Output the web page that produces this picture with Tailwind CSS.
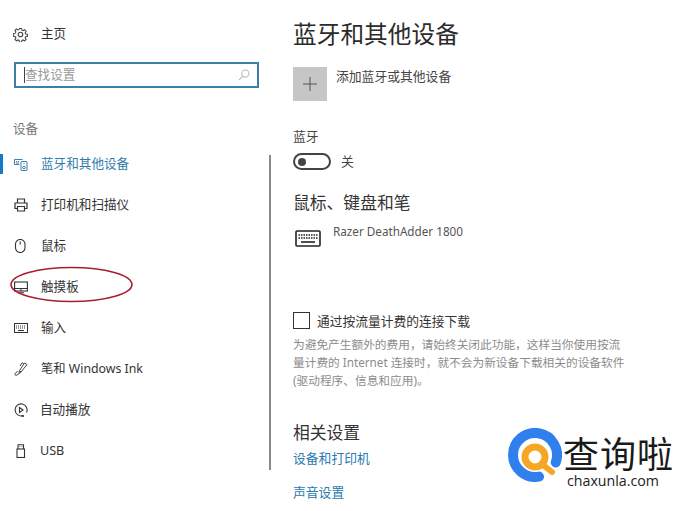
<!DOCTYPE html>
<html lang="zh-CN">
<head>
  <meta charset="UTF-8" />
  <title>蓝牙和其他设备</title>
  <script src="https://cdn.jsdelivr.net/npm/@tailwindcss/browser@4"></script>
</head>
<body class="bg-white">
  <div class="relative w-[682px] h-[511px] overflow-hidden flex font-['Noto_Sans','Noto_Sans_CJK_SC',sans-serif] text-[#333]">

    <!-- sidebar -->
    <aside class="w-[269px] shrink-0 pt-[26px] relative">
      <div class="flex items-center h-[16px] pl-[13px] gap-[13px] text-[12.600px]">
        <svg class="w-[15px] h-[15px]" viewBox="0 0 16 16" fill="none" stroke="#444" stroke-width="1.200"><circle cx="8" cy="8" r="2.400"/><path d="M6.800 1h2.400l.4 2 1.400.6 1.700-1.100 1.700 1.700-1.100 1.700.6 1.400 2 .4v2.400l-2 .4-.6 1.400 1.100 1.700-1.700 1.700-1.700-1.100-1.400.6-.4 2H6.800l-.4-2-1.400-.6-1.700 1.100-1.700-1.700 1.100-1.700-.6-1.400-2-.4V6.800l2-.4.6-1.400-1.100-1.700 1.700-1.700 1.700 1.100 1.400-.6z" transform="translate(.6 .6) scale(.93)"/></svg>
        <span>主页</span>
      </div>
      <div class="ml-[14px] mt-[20px] w-[245px] h-[26px] border-2 border-[#3f7ea6] flex items-center pl-[8px] pr-[7px] justify-between">
        <span class="text-[12.600px] text-[#999] border-l border-[#444] leading-[16px]">查找设置</span>
        <svg class="w-[12px] h-[12px]" viewBox="0 0 12 12" fill="none" stroke="#bbb" stroke-width="1.100"><circle cx="7.400" cy="4.600" r="3.600"/><path d="M4.800 7.200L1 11"/></svg>
      </div>
      <div class="pl-[13px] mt-[33px] text-[12.600px] leading-[16px] text-[#777]">设备</div>

      <nav class="mt-[19px] flex flex-col gap-[25px] text-[12.600px]">
        <a class="relative flex items-center h-[16px] pl-[14px] gap-[13px] text-[#2f7cab]">
          <span class="absolute left-0 top-[-2px] w-[3px] h-[20px] bg-[#1479c9]"></span>
          <svg class="w-[14px] h-[14px]" viewBox="0 0 14 14" fill="none" stroke="#3b7fa8" stroke-width="1"><path d="M8.500 2.500H.5v5h5"/><path d="M2 4.500h1M4 4.500h1M2 6h3"/><rect x="7" y="4.500" width="6" height="9" rx=".5"/><circle cx="10" cy="10.500" r="1.300"/><path d="M9.500 6.500h1"/></svg>
          <span>蓝牙和其他设备</span>
        </a>
        <a class="flex items-center h-[16px] pl-[14px] gap-[13px]">
          <svg class="w-[14px] h-[14px]" viewBox="0 0 14 14" fill="none" stroke="#333" stroke-width="1.200"><path d="M3.500 5V1h7v4M3.500 10.500H1V5h12v5.500h-2.500"/><path d="M3.500 8.500h7V13h-7z"/></svg>
          <span>打印机和扫描仪</span>
        </a>
        <a class="flex items-center h-[16px] pl-[14px] gap-[13px]">
          <svg class="w-[14px] h-[14px]" viewBox="0 0 14 14" fill="none" stroke="#333" stroke-width="1.100"><rect x="1.500" y=".5" width="9.500" height="13" rx="4.700"/><path d="M6.200 2.500v3"/></svg>
          <span>鼠标</span>
        </a>
        <a class="flex items-center h-[16px] pl-[14px] gap-[13px]">
          <svg class="w-[14px] h-[14px]" viewBox="0 0 14 14" fill="none" stroke="#333" stroke-width="1.100"><rect x=".6" y="2" width="12.800" height="9"/><path d="M.6 8.500h12.800M7 8.500V11M4 12.800h6"/></svg>
          <span>触摸板</span>
        </a>
        <a class="flex items-center h-[16px] pl-[14px] gap-[13px]">
          <svg class="w-[14px] h-[14px]" viewBox="0 0 14 14" fill="none" stroke="#333" stroke-width="1"><rect x=".5" y="2.500" width="13" height="9"/><path d="M2 5h10M2 7h10" stroke-dasharray="1 1"/><path d="M4 9.500h6"/></svg>
          <span>输入</span>
        </a>
        <a class="flex items-center h-[16px] pl-[14px] gap-[13px]">
          <svg class="w-[14px] h-[14px]" viewBox="0 0 14 14" fill="none" stroke="#444" stroke-width="1"><path d="M13 2.500L10.500 1 5.500 8.500 7 10z"/><path d="M5.500 8.500L5 11.500 7 10"/><path d="M9.500 1.500L8 .8 6 4"/><path d="M5 11.500C3.500 13.500 .8 13.800 .8 12.300c0-1.500 2.200-2 3-3.300"/></svg>
          <span class="text-[12.300px]">笔和 Windows Ink</span>
        </a>
        <a class="flex items-center h-[16px] pl-[14px] gap-[12px]">
          <svg class="w-[14px] h-[14px]" viewBox="0 0 14 14" fill="none" stroke="#333" stroke-width="1.100"><path d="M9 12.600A6 6 0 1 1 12.500 9.500"/><path d="M5.500 4.500L9 7l-3.500 2.500z"/><path d="M7.500 13h2.500" stroke-width="1.600"/></svg>
          <span>自动播放</span>
        </a>
        <a class="flex items-center h-[16px] pl-[14px] gap-[12px]">
          <svg class="w-[14px] h-[14px]" viewBox="0 0 14 14" fill="none" stroke="#333" stroke-width="1.100"><rect x="3" y="5" width="7.500" height="8.500"/><path d="M4 5V.7h5.500V5M5.700 2.500v.5M7.800 2.500v.5"/></svg>
          <span>USB</span>
        </a>
      </nav>
    </aside>

    <!-- divider -->
    <div class="w-[2px] h-[315px] mt-[155px] bg-[#8a8a8a] shrink-0"></div>

    <!-- content -->
    <main class="pl-[22px] pt-[18px] flex-1">
      <h1 class="text-[23.700px] leading-[32px] text-[#2b2b2b]">蓝牙和其他设备</h1>
      <div class="mt-[17px] flex gap-[9px]">
        <div class="w-[34px] h-[34px] bg-[#c6c6c6] flex items-center justify-center">
          <svg class="w-[14px] h-[14px]" viewBox="0 0 14 14" stroke="#555" stroke-width="1"><path d="M7 0v14M0 7h14"/></svg>
        </div>
        <span class="text-[12.800px] leading-[16px] mt-[1px] text-[#444]">添加蓝牙或其他设备</span>
      </div>
      <div class="mt-[27px] text-[12.800px] leading-[16px] text-[#444]">蓝牙</div>
      <div class="mt-[8px] flex items-center gap-[10px]">
        <div class="w-[38px] h-[17px] rounded-full border-2 border-[#444] flex items-center pl-[3px]">
          <span class="w-[8px] h-[8px] rounded-full bg-[#444]"></span>
        </div>
        <span class="text-[12.800px] text-[#444]">关</span>
      </div>
      <h2 class="mt-[20px] text-[16.800px] leading-[24px] text-[#333]">鼠标、键盘和笔</h2>
      <div class="mt-[8px] flex gap-[12px]">
        <svg class="w-[26px] h-[17px] mt-[7px] ml-[2px]" viewBox="0 0 26 17" fill="none" stroke="#222"><rect x="1" y="1" width="24" height="15" rx="1" stroke-width="1.600"/><path d="M3.500 5h19M3.500 8h19" stroke-width="1.600" stroke-dasharray="1.500 1"/><path d="M6 12h14" stroke-width="1.600"/></svg>
        <span class="text-[11.700px] leading-[16px] text-[#555]">Razer DeathAdder 1800</span>
      </div>

      <div class="mt-[65px] flex items-center gap-[7px]">
        <span class="w-[17px] h-[17px] border-[1.500px] border-[#333]"></span>
        <span class="text-[12.750px] leading-[16px] text-[#333]">通过按流量计费的连接下载</span>
      </div>
      <p class="mt-[6px] text-[11.700px] leading-[18px] text-[#8c8c8c] whitespace-nowrap">为避免产生额外的费用，请始终关闭此功能，这样当你使用按流<br />量计费的 Internet 连接时，就不会为新设备下载相关的设备软件<br />(驱动程序、信息和应用)。</p>
      <h2 class="mt-[32px] text-[16.800px] leading-[24px] text-[#333]">相关设置</h2>
      <a class="block mt-[4px] text-[12.800px] leading-[18px] text-[#2a7ab0]">设备和打印机</a>
      <a class="block mt-[16px] text-[12.800px] leading-[18px] text-[#2a7ab0]">声音设置</a>
    </main>

    <!-- red annotation around 触摸板 -->
    <svg class="absolute left-[8px] top-[265px]" width="128" height="40" viewBox="0 0 128 40" fill="none"><ellipse cx="63.500" cy="19.500" rx="60.500" ry="17" stroke="#a81f2c" stroke-width="1.600"/></svg>

    <!-- watermark -->
    <div class="absolute left-[498px] top-[420px] w-[184px] h-[80px] bg-white flex items-start pl-[10px] pt-[8px]">
      <svg class="w-[54px] h-[54px] shrink-0" viewBox="0 0 54 54" fill="none">
        <path d="M47.700 34.500A22 22 0 1 0 31 48.600" stroke="#2f80ed" stroke-width="10" stroke-linecap="round"/>
        <circle cx="27" cy="29" r="10" stroke="#f5a623" stroke-width="7"/>
        <path d="M35 37l9 7" stroke="#f5a623" stroke-width="6" stroke-linecap="round"/>
      </svg>
      <div class="ml-[1px] flex flex-col items-start">
        <span class="mt-[4px] text-[36px] leading-[40px] text-[#1a1a1a] font-['Noto_Sans_CJK_SC',sans-serif] tracking-[1px] whitespace-nowrap">查询啦</span>
        <span class="ml-[4px] text-[14.200px] leading-[18px] text-[#222] font-['Open_Sans',sans-serif]">chaxunla.com</span>
      </div>
    </div>
  </div>
</body>
</html>
